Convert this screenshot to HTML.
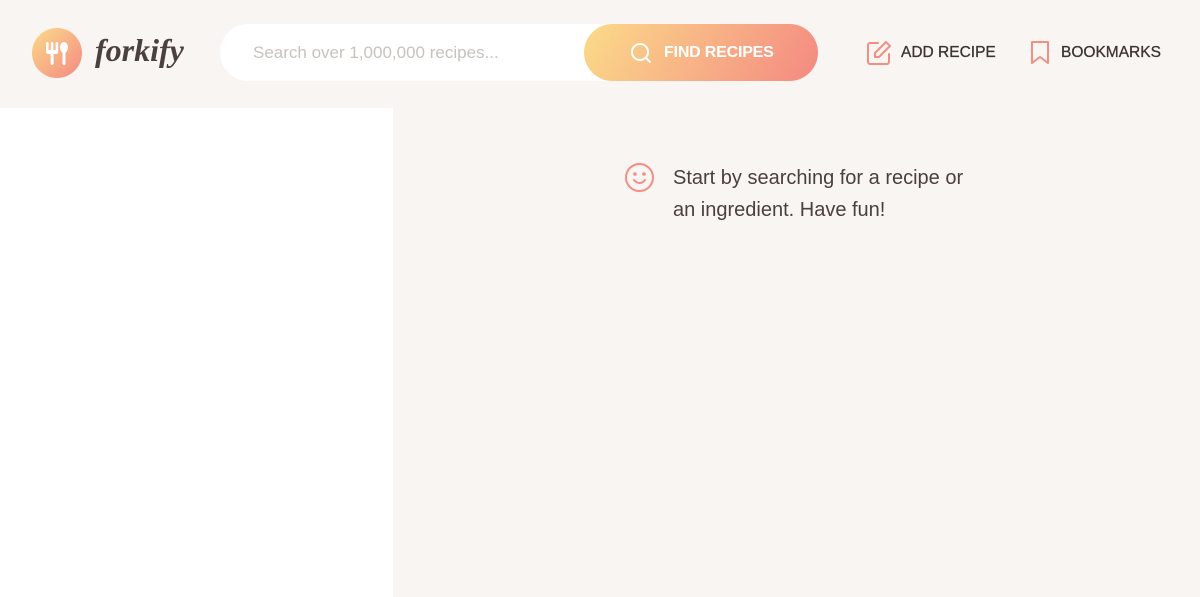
<!DOCTYPE html>
<html><head><style>
*{margin:0;padding:0;box-sizing:border-box}
body{width:1200px;height:597px;background:#f9f5f3;font-family:"Liberation Sans",sans-serif;position:relative;overflow:hidden;color:#615551}
.side{position:absolute;left:0;top:108px;width:393px;height:489px;background:#fff}
.logo{position:absolute;left:32px;top:28px;width:50px;height:50px;border-radius:50%;background:linear-gradient(135deg,#fbdb89,#f48982)}
.brand{position:absolute;left:95px;top:32px;font-family:"Liberation Serif",serif;font-style:italic;font-weight:bold;font-size:32px;color:#4a403d}
.search{position:absolute;left:220px;top:24px;width:598px;height:57px;background:#fff;border-radius:29px}
.ph{position:absolute;left:33px;top:19px;font-size:17px;color:#c9c2bf}
.btn{position:absolute;left:364px;top:0;width:234px;height:57px;border-radius:29px;background:linear-gradient(120deg,#fbdb89,#f48982);color:#fff;font-size:16px;font-weight:bold;letter-spacing:-.2px}
.btn span{position:absolute;left:80px;top:20px}
.nav{position:absolute;top:44px;font-size:15.5px;color:#3d3432;-webkit-text-stroke:.3px #3d3432}
.msg{position:absolute;left:673px;top:162px;font-size:20px;line-height:32px;color:#4a403d}
</style></head><body>
<div class="side"></div>
<div class="logo"><svg width="50" height="50" viewBox="0 0 50 50"><g fill="#fff"><rect x="14" y="14" width="2.6" height="10" rx="1.2"/><rect x="18.8" y="14" width="2.6" height="10" rx="1.2"/><rect x="23.6" y="14" width="2.6" height="10" rx="1.2"/><rect x="14" y="22" width="12.2" height="4" rx="2"/><rect x="18.6" y="24" width="3" height="13" rx="1.5"/><ellipse cx="32" cy="19.5" rx="4" ry="5.5"/><rect x="30.5" y="22" width="3" height="15" rx="1.5"/></g></svg></div>
<div class="brand">forkify</div>
<div class="search"><div class="ph">Search over 1,000,000 recipes...</div>
<div class="btn"><svg style="position:absolute;left:45px;top:17px" width="24" height="24" viewBox="0 0 24 24" fill="none" stroke="#fff" stroke-width="2"><circle cx="11" cy="11" r="8"/><path d="M17 17l4 4" stroke-linecap="round"/></svg><span>FIND RECIPES</span></div></div>
<svg style="position:absolute;left:866px;top:40px" width="26" height="26" viewBox="0 0 26 26" fill="none" stroke="#f38e82" stroke-width="2" stroke-linejoin="round" stroke-linecap="round"><path d="M12 3H4a2 2 0 0 0-2 2v17a2 2 0 0 0 2 2h17a2 2 0 0 0 2-2v-8"/><path d="M20 2l4 4-11 11H9v-4z"/></svg>
<div class="nav" style="left:901px">ADD RECIPE</div>
<svg style="position:absolute;left:1030px;top:40px" width="22" height="26" viewBox="0 0 22 26" fill="none" stroke="#f38e82" stroke-width="2" stroke-linejoin="round"><path d="M2 2h16v21l-8-6-8 6z"/></svg>
<div class="nav" style="left:1061px">BOOKMARKS</div>
<svg style="position:absolute;left:624px;top:162px" width="31" height="31" viewBox="0 0 31 31" fill="none" stroke="#f38e82" stroke-width="2" stroke-linecap="round"><circle cx="15.5" cy="15.5" r="13.5"/><path d="M10 18c3 4 8 4 11 0"/><circle cx="11" cy="12" r=".8" fill="#f38e82"/><circle cx="20" cy="12" r=".8" fill="#f38e82"/></svg>
<div class="msg">Start by searching for a recipe or<br>an ingredient. Have fun!</div>
</body></html>
